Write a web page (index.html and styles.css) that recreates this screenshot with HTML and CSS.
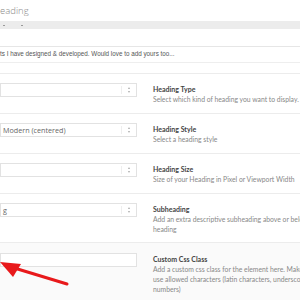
FILE: index.html
```html
<!DOCTYPE html>
<html lang="en">
<head>
    <meta charset="UTF-8">
    <meta name="viewport" content="width=device-width, initial-scale=1.0">
    <title>Heading</title>
    <link rel="stylesheet" href="styles.css">
</head>
<body>
    <div class="page">
        <h1 class="title">eading</h1>
        <div class="tabs"><span></span><span></span></div>
        <div class="tabs-space"></div>
        <p class="intro">ts I have designed &amp; developed. Would love to add yours too...</p>
        <div class="spacer"></div>

        <div class="row">
            <div class="field"><div class="select"><span class="value"></span><span class="arrows"></span></div></div>
            <div class="info">
                <div class="label">Heading Type</div>
                <div class="desc">Select which kind of heading you want to display.</div>
            </div>
        </div>

        <div class="row">
            <div class="field"><div class="select"><span class="value">Modern (centered)</span><span class="arrows"></span></div></div>
            <div class="info">
                <div class="label">Heading Style</div>
                <div class="desc">Select a heading style</div>
            </div>
        </div>

        <div class="row">
            <div class="field"><div class="select"><span class="value"></span><span class="arrows"></span></div></div>
            <div class="info">
                <div class="label">Heading Size</div>
                <div class="desc">Size of your Heading in Pixel or Viewport Width</div>
            </div>
        </div>

        <div class="row row-tall">
            <div class="field"><div class="select"><span class="value">g</span><span class="arrows"></span></div></div>
            <div class="info">
                <div class="label">Subheading</div>
                <div class="desc">Add an extra descriptive subheading above or below the heading</div>
            </div>
        </div>

        <div class="row row-active">
            <div class="field"><div class="input"></div></div>
            <div class="info">
                <div class="label">Custom Css Class</div>
                <div class="desc">Add a custom css class for the element here. Make sure to use allowed characters (latin characters, underscores and numbers)</div>
            </div>
        </div>

        <svg class="arrow" width="80" height="40" viewBox="0 0 80 40">
            <line x1="67" y1="34" x2="11" y2="17" stroke="#e8191b" stroke-width="3" stroke-linecap="round"/>
            <polygon points="0,12 21,14 13,27" fill="#e8191b"/>
        </svg>
    </div>
</body>
</html>
```

FILE: styles.css
```css
body {
    margin: 0;
    background: #fff;
    font-family: Lato, "Open Sans", sans-serif;
    overflow: hidden;
}
.page {
    position: relative;
    width: 300px;
    height: 300px;
    overflow: hidden;
}
.title {
    margin: 0;
    height: 21px;
    font-family: "Open Sans", sans-serif;
    font-weight: 300;
    font-size: 9.5px;
    line-height: 22px;
    color: #888;
}
.tabs {
    height: 8px;
    background: #ececec;
    display: flex;
    gap: 16px;
    align-items: center;
    padding-left: 3px;
}
.tabs span {
    width: 2px;
    height: 1px;
    background: #999;
}
.tabs-space {
    height: 17px;
    border-bottom: 1px solid #e6e6e6;
}
.intro {
    margin: 0;
    height: 15px;
    font-family: "Liberation Sans", Arial, sans-serif;
    font-size: 6.3px;
    line-height: 13px;
    color: #555;
    white-space: nowrap;
    border-bottom: 1px solid #eee;
}
.spacer {
    height: 10px;
    border-bottom: 1px solid #ececec;
}
.row {
    display: grid;
    grid-template-columns: 137px 1fr;
    gap: 16px;
    padding: 9px 0 0;
    height: 30px;
    border-bottom: 1px solid #ececec;
}
.row-tall {
    height: 39px;
}
.row-active {
    background: #fafafa;
    height: 80px;
    padding-top: 10px;
}
.select, .input {
    height: 12px;
    border: 1px solid #e2e2e2;
    background: #fff;
    display: flex;
    align-items: center;
    font-family: "Open Sans", sans-serif;
    font-size: 7.2px;
    color: #666;
}
.select .value {
    flex: 1;
    padding-left: 2px;
}
.select .arrows {
    width: 14px;
    height: 8px;
    border-left: 1px solid #eee;
    position: relative;
}
.select .arrows::before,
.select .arrows::after {
    content: "";
    position: absolute;
    left: 6px;
    border-left: 1.5px solid transparent;
    border-right: 1.5px solid transparent;
}
.select .arrows::before {
    top: 1px;
    border-bottom: 2px solid #aaa;
}
.select .arrows::after {
    bottom: 1px;
    border-top: 2px solid #aaa;
}
.info {
    padding-top: 1px;
    min-width: 0;
}
.label {
    font-size: 7px;
    font-weight: 700;
    line-height: 10px;
    color: #444;
}
.desc {
    font-size: 6.8px;
    line-height: 10px;
    color: #888;
    white-space: nowrap;
}
.row-tall .desc,
.row-active .desc {
    white-space: normal;
    width: 180px;
}
.arrow {
    position: absolute;
    left: 0;
    top: 250px;
}
```
